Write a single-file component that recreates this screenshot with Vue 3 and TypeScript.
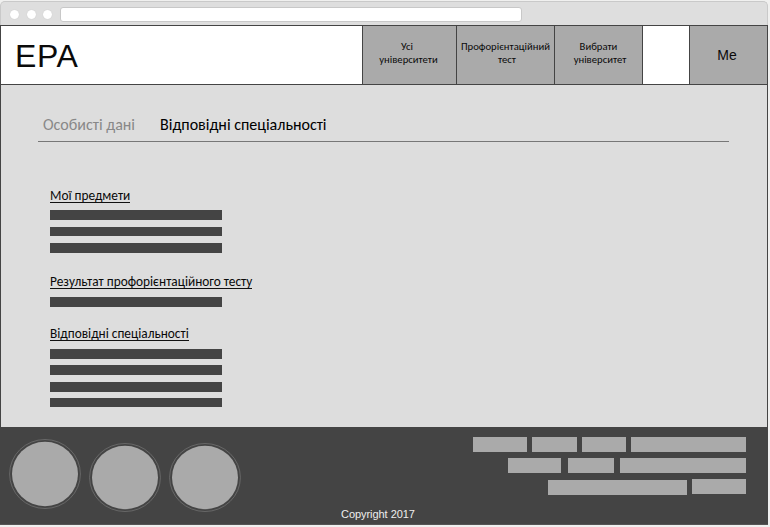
<script setup lang="ts">
interface NavItem { id: string; lines: string[] }
interface Section { id: string; title: string; bars: number[] }
interface Block { w: number; gap: number }

const nav: NavItem[] = [
  { id: 'all', lines: ['Усі', 'університети'] },
  { id: 'test', lines: ['Профорієнтаційний', 'тест'] },
  { id: 'pick', lines: ['Вибрати', 'університет'] },
]

const sections: Section[] = [
  { id: 'subjects', title: 'Мої предмети', bars: [10, 9, 10] },
  { id: 'result', title: 'Результат профорієнтаційного тесту', bars: [10] },
  { id: 'majors', title: 'Відповідні спеціальності', bars: [10, 10, 10, 9] },
]

const rows: Block[][] = [
  [{ w: 54, gap: 0 }, { w: 45, gap: 5 }, { w: 44, gap: 5 }, { w: 115, gap: 5 }],
  [{ w: 53, gap: 0 }, { w: 46, gap: 7 }, { w: 126, gap: 6 }],
  [{ w: 139, gap: 0 }, { w: 54, gap: 5 }],
]
</script>

<template>
  <div class="window">
    <div class="chrome">
      <i class="dot"></i><i class="dot"></i><i class="dot"></i>
      <div class="address"></div>
    </div>
    <header class="header">
      <div class="logo">EPA</div>
      <nav class="nav">
        <a v-for="n in nav" :key="n.id" class="cell" :class="n.id">
          <span v-for="l in n.lines" :key="l">{{ l }}</span>
        </a>
        <div class="cell blank"></div>
        <a class="cell me">Me</a>
      </nav>
    </header>
    <main class="main">
      <div class="tabs">
        <a class="tab first">Особисті дані</a>
        <a class="tab active">Відповідні спеціальності</a>
      </div>
      <section v-for="s in sections" :key="s.id" class="section" :class="s.id">
        <h2><span>{{ s.title }}</span></h2>
        <div class="bars">
          <div v-for="(h, i) in s.bars" :key="i" class="bar" :style="{ height: h + 'px' }"></div>
        </div>
      </section>
    </main>
    <footer class="footer">
      <div class="footer-top">
        <div class="circles">
          <svg v-for="i in 3" :key="i" class="circle" :class="'c' + i" width="72" height="70" viewBox="0 0 72 70">
            <ellipse cx="36" :cy="i === 1 ? 35 : 34.5" rx="35.4" :ry="i === 1 ? 34.5 : 34" fill="none" stroke="#777" stroke-width=".7" />
            <ellipse cx="36" :cy="i === 1 ? 35 : 34.5" rx="33" :ry="i === 1 ? 32.2 : 31.7" fill="#aaa" />
          </svg>
        </div>
        <div class="links">
          <div v-for="(r, i) in rows" :key="i" class="row">
            <div v-for="(b, j) in r" :key="j" class="block" :style="{ width: b.w + 'px', marginLeft: b.gap + 'px' }"></div>
          </div>
        </div>
      </div>
      <div class="copy">Copyright 2017</div>
    </footer>
  </div>
</template>

<style>
body { background: #f0f0ef; overflow: hidden; }
</style>

<style scoped>
* { box-sizing: border-box; }
.window { width: 768px; height: 527px; padding-top: 1px; font-family: Carlito, Lato, "Noto Sans", sans-serif; color: #0a0a0a; }
.chrome { height: 24px; background: #dedede; border: 1px solid #c9c9c9; border-bottom: 0; border-radius: 5px 5px 0 0; display: flex; align-items: center; padding: 1px 0 0 9px; }
.dot { width: 9px; height: 9px; border-radius: 50%; background: #fff; box-shadow: 0 0 1px #bbb; margin-right: 7.5px; }
.address { width: 462px; height: 15px; background: #fff; border: 1px solid #c8c8c8; border-radius: 3px; }
.header { height: 60px; background: #fff; border: 1px solid #444; display: flex; justify-content: space-between; }
.logo { font: 32px/58px "Liberation Sans", Arial, sans-serif; padding: 1px 0 0 14px; letter-spacing: .6px; }
.nav { display: flex; }
.cell { background: #aaa; border-left: 1px solid #444; display: flex; flex-direction: column; align-items: center; font-size: 10.67px; line-height: 13px; padding-top: 14px; white-space: nowrap; }
.all { width: 94px; padding-right: 2px; }
.all span:first-child { padding-right: 3px; }
.test { width: 98px; }
.test span:last-child { padding-left: 3px; }
.pick { width: 88px; }
.pick span:last-child { padding-left: 3px; }
.blank { width: 47px; background: #fff; }
.me { width: 78px; font: 14px/58px "Liberation Sans", Arial, sans-serif; padding: 0 3px 0 0; }
.main { height: 342px; background: #ddd; border: solid #444; border-width: 0 1px; padding: 27px 38px 0 37px; }
.tabs { height: 30px; border-bottom: 1px solid #777; display: flex; font-size: 16px; line-height: 26px; white-space: nowrap; }
.tab { color: #888; }
.first { margin-left: 5px; width: 117px; }
.active { color: #000; }
.section { padding-left: 12px; }
.subjects { margin-top: 45px; }
.result { margin-top: 20px; }
.majors { margin-top: 18px; }
h2 { margin: 0 0 7px; height: 16px; font-size: 13.33px; font-weight: 400; line-height: 16px; white-space: nowrap; }
.section h2 span { display: inline-block; height: 16px; border-bottom: 1px solid #111; line-height: 17px; }
.result h2 { margin-bottom: 8px; }
.majors h2 { margin-bottom: 8px; }
.bars { display: flex; flex-direction: column; gap: 7px; width: 172px; }
.majors .bars { gap: 6.4px; }
.bar { background: #444; flex: none; }
.footer { height: 98px; background: #444; border-bottom: 1px solid #555; }
.footer-top { height: 80px; display: flex; justify-content: space-between; padding: 0 22px 0 9px; }
.circles { display: flex; gap: 8px; padding-top: 12px; }
.c2, .c3 { margin-top: 4px; }
.circle { flex: none; }
.links { padding-top: 10px; }
.row { display: flex; justify-content: flex-end; margin-bottom: 6px; }
.row:last-child > :first-child { position: relative; top: 1px; }
.block { height: 15px; background: #aaa; }
.copy { font: 11px/15px "Liberation Sans", Arial, sans-serif; color: #eee; padding-left: 341px; letter-spacing: -.05px; }
</style>
